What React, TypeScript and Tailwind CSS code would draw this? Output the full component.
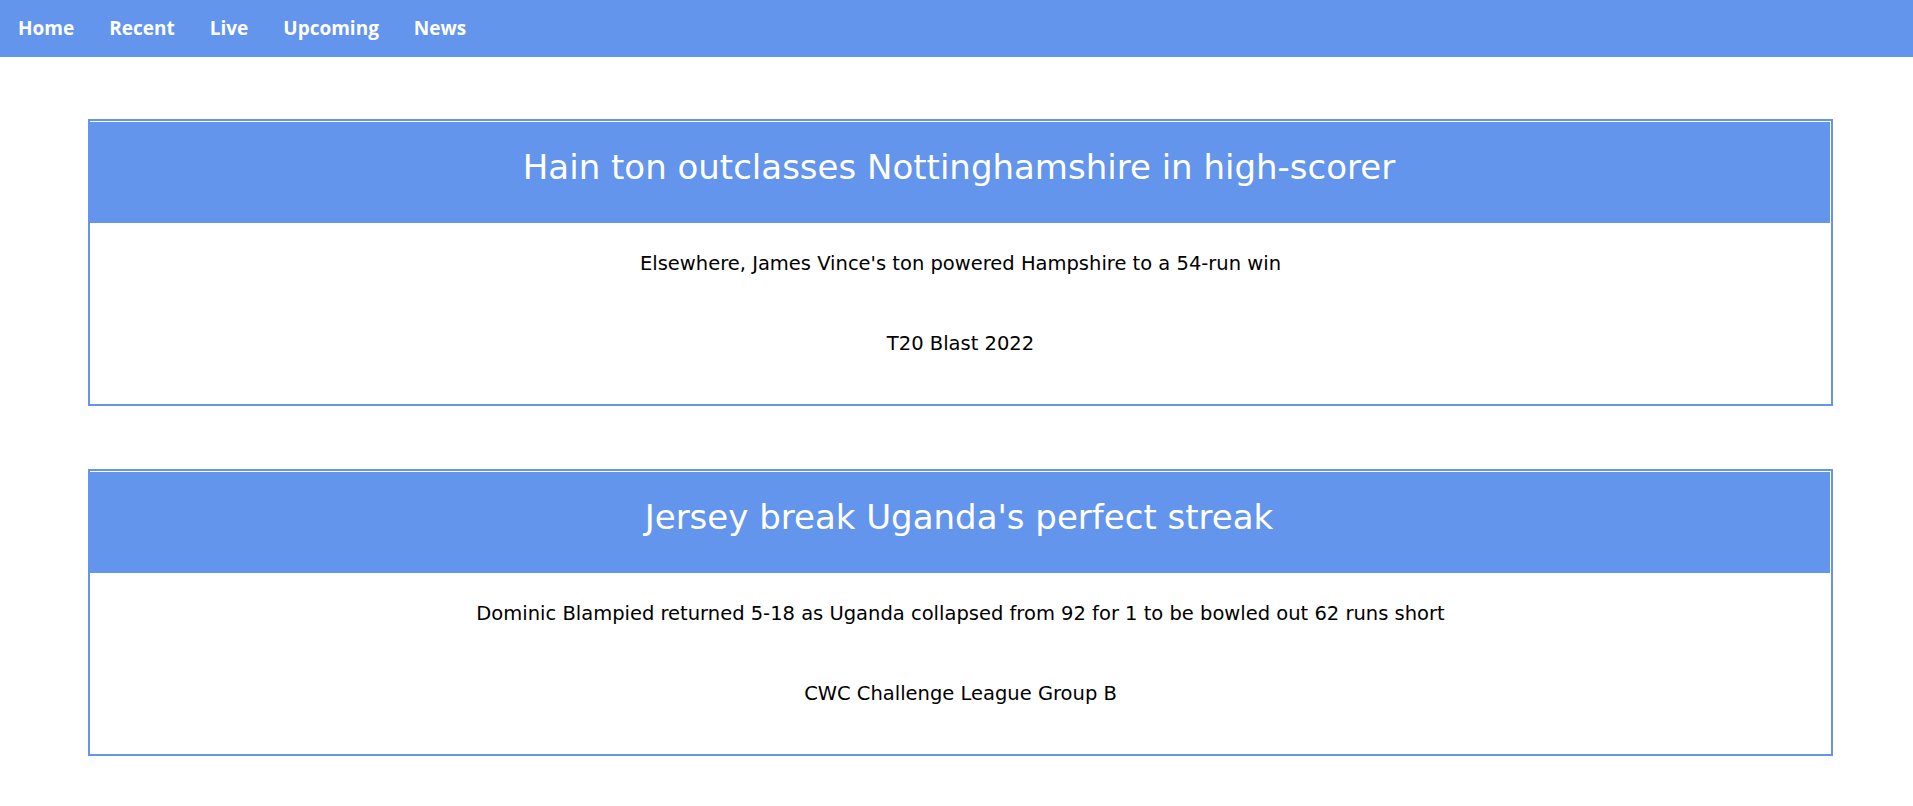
const NAV_LINKS = ["Home", "Recent", "Live", "Upcoming", "News"];

const ARTICLES = [
  {
    title: "Hain ton outclasses Nottinghamshire in high-scorer",
    summary: "Elsewhere, James Vince's ton powered Hampshire to a 54-run win",
    series: "T20 Blast 2022",
  },
  {
    title: "Jersey break Uganda's perfect streak",
    summary:
      "Dominic Blampied returned 5-18 as Uganda collapsed from 92 for 1 to be bowled out 62 runs short",
    series: "CWC Challenge League Group B",
  },
];

function NavBar() {
  return (
    <nav className="flex h-[57px] items-center gap-[35px] bg-[#6495ED] pl-[18px]">
      {NAV_LINKS.map((link) => (
        <a
          key={link}
          href="#"
          className="font-['Open_Sans',sans-serif] text-[19px] font-bold text-white"
        >
          {link}
        </a>
      ))}
    </nav>
  );
}

function NewsCard({ title, summary, series }: (typeof ARTICLES)[number]) {
  return (
    <div className="mb-[63px] ml-[88px] w-[1745px] border-2 border-[#6495ED] pt-px">
      <div className="-ml-0.5 mr-px h-[101px] bg-[#6495ED] pt-[26px] text-center">
        <h2 className="text-[34px] leading-[38px] text-white">{title}</h2>
      </div>
      <div className="flex flex-col items-center gap-[58px] pt-[30px] pb-[49px] text-[19.5px] leading-[22px] text-black">
        <p>{summary}</p>
        <p>{series}</p>
      </div>
    </div>
  );
}

export default function App() {
  return (
    <div className="min-h-screen bg-white font-['DejaVu_Sans',sans-serif]">
      <NavBar />
      <main className="pt-[62px]">
        {ARTICLES.map((article) => (
          <NewsCard key={article.title} {...article} />
        ))}
      </main>
    </div>
  );
}
